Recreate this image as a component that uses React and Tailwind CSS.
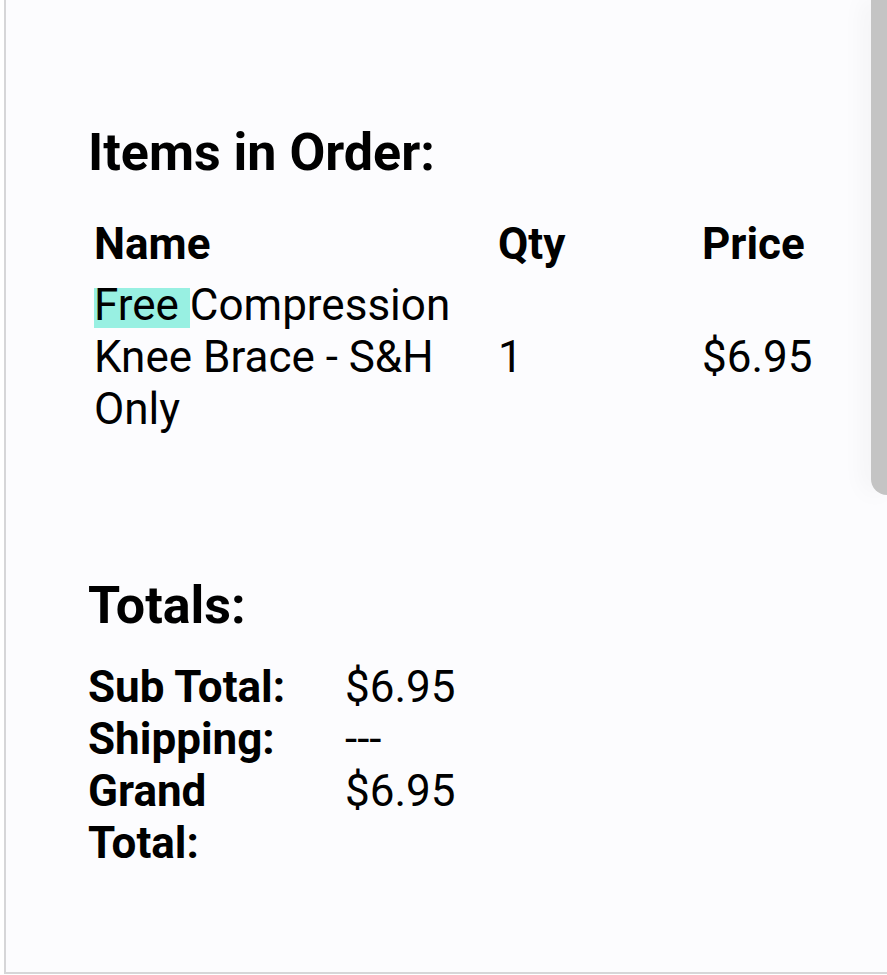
import React from 'react';

// --- Order data ---
const items = [
  { id: 1, highlight: 'Free ', rest: 'Compression Knee Brace - S&H Only', qty: 1, price: '$6.95' },
];

const totals = [
  { label: 'Sub Total:', value: '$6.95' },
  { label: 'Shipping:', value: '---' },
  { label: 'Grand Total:', value: '$6.95' },
];

const App = () => {
  return (
    <div className="min-h-screen bg-white text-black" style={{ fontFamily: 'Roboto, "Noto Sans", sans-serif' }}>
      <div className="relative ml-[4px] h-[974px] overflow-hidden border-l-2 border-b-2 border-[#d6d6d8] bg-[#fcfcfe] pl-[82px] pt-[123px]">

        {/* --- Scroll handle on the right edge --- */}
        <div className="absolute right-0 top-0 h-[495px] w-[16px] rounded-bl-[26px] bg-[#c4c4c4] shadow-[-6px_0_24px_rgba(0,0,0,0.05)]" />

        {/* --- Items --- */}
        <h2 className="text-[52px] font-bold leading-[60px]">Items in Order:</h2>

        <div className="mt-[35px] grid grid-cols-[404px_204px_auto] pl-[6px] text-[44px] leading-[52px]">
          <div className="font-bold">Name</div>
          <div className="font-bold">Qty</div>
          <div className="font-bold">Price</div>
        </div>

        {items.map((item) => (
          <div key={item.id} className="mt-[9px] grid grid-cols-[404px_204px_auto] items-center pl-[6px] text-[44px] leading-[52px]">
            <div className="pr-[30px]">
              <span className="bg-[linear-gradient(#98f0e2,#98f0e2)] bg-no-repeat bg-size-[100%_40px] bg-position-[0_9px]">{item.highlight}</span>
              {item.rest}
            </div>
            <div>{item.qty}</div>
            <div>{item.price}</div>
          </div>
        ))}

        {/* --- Totals --- */}
        <h2 className="mt-[141px] text-[52px] font-bold leading-[60px]">Totals:</h2>

        <div className="mt-[25px] grid grid-cols-[220px_auto] gap-x-[37px] text-[44px] leading-[52px]">
          {totals.map((row) => (
            <React.Fragment key={row.label}>
              <div className="font-bold">{row.label}</div>
              <div>{row.value}</div>
            </React.Fragment>
          ))}
        </div>
      </div>
    </div>
  );
};

export default App;
